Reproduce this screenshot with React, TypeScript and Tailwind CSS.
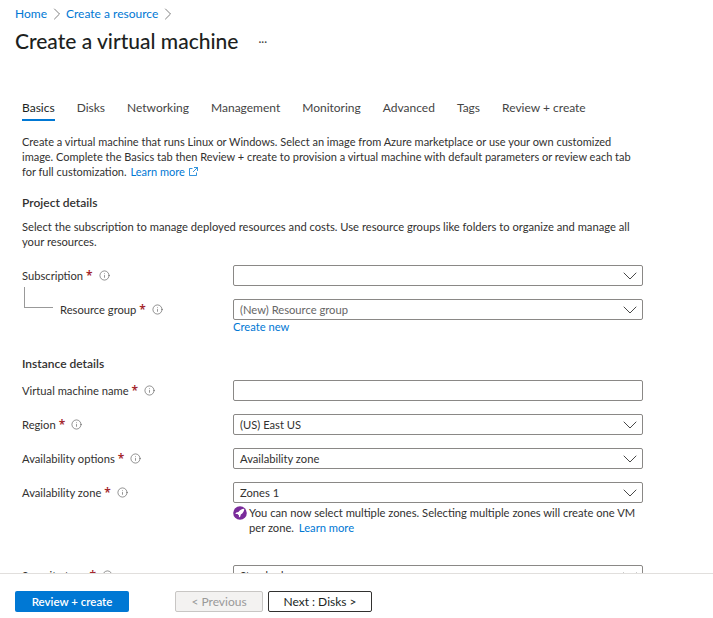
import { ChevronDown, ChevronRight, Info } from 'lucide-react'

const tabs = ['Basics', 'Disks', 'Networking', 'Management', 'Monitoring', 'Advanced', 'Tags', 'Review + create']

function Field({ label, value, dropdown = true, muted = false, indent = false }: { label: string; value?: string; dropdown?: boolean; muted?: boolean; indent?: boolean }) {
  return (
    <div className="flex h-[21px] items-center">
      <div className={`flex shrink-0 items-center ${indent ? 'w-[173px] pl-[38px]' : 'w-[211px]'} box-content`}>
        <span>{label}</span>
        <span className="ml-[3px] font-['Noto_Sans',sans-serif] text-[12px] font-semibold text-[#a4262c]">*</span>
        <Info size={11} strokeWidth={1.25} className="ml-[6px] text-[#444]" />
      </div>
      <div className={`flex h-[21px] w-[410px] items-center justify-between rounded-[2px] border border-[#8a8886] pl-[6px] ${muted ? 'text-[#666]' : ''}`}>
        <span>{value}</span>
        {dropdown && <ChevronDown size={24} strokeWidth={0.9} className="text-[#333]" />}
      </div>
    </div>
  )
}

function External() {
  return (
    <svg width="9" height="9" viewBox="0 0 9 9" fill="none" stroke="#0078d4" strokeWidth="0.8" className="ml-[4px] inline-block align-[0px]">
      <path d="M3.5 1.5H.5v7h7V5.5M5 .5h3.5V4M8.5.5 4 5" />
    </svg>
  )
}

export default function App() {
  return (
    <div className="flex h-[618px] w-[713px] flex-col overflow-hidden bg-white font-['Lato',sans-serif] text-[11.2px] leading-[15px] text-[#323130]">
      <main className="min-h-0 flex-1 overflow-hidden">
        <nav className="box-content flex h-[15px] items-center pl-[15px] pt-[6px] text-[12px] text-[#0078d4]">
          <span>Home</span>
          <ChevronRight size={20} strokeWidth={1} className="mr-[-2px] text-[#666]" />
          <span className="ml-[1px]">Create a resource</span>
          <ChevronRight size={20} strokeWidth={1} className="text-[#666]" />
        </nav>
        <div className="mt-[5px] flex items-center pl-[15px]">
          <h1 className="text-[21px] font-medium leading-[30px] text-[#201f1e]">Create a virtual machine</h1>
          <span className="ml-[20px] text-[11px] text-[#444]">···</span>
        </div>

        <div className="ml-[22px] mt-[44px] flex gap-[22px] text-[12px] text-[#444]">
          {tabs.map((t, i) => (
            <div key={t} className={`h-[21px] border-b-2 ${i === 0 ? 'border-[#0078d4] text-[#201f1e]' : 'border-transparent'}`}>{t}</div>
          ))}
        </div>

        <div className="px-[22px]">
          <p className="mt-[13px] w-[613px] text-[11px]">
            Create a virtual machine that runs Linux or Windows. Select an image from Azure marketplace or use your own customized image. Complete the Basics tab then Review + create to provision a virtual machine with default parameters or review each tab for full customization. <span className="ml-[1px] text-[#0078d4]">Learn more<External /></span>
          </p>
          <h2 className="mt-[16px] text-[12px] font-semibold">Project details</h2>
          <p className="mt-[9px] w-[610px]">Select the subscription to manage deployed resources and costs. Use resource groups like folders to organize and manage all your resources.</p>

          <div className="relative mt-[16px] flex flex-col gap-[13px]">
            <Field label="Subscription" />
            <Field label="Resource group" value="(New) Resource group" muted indent />
            <div className="absolute left-[2px] top-[22px] h-[21px] w-[29px] border-b border-l border-[#999]" />
          </div>
          <a className="ml-[211px] mt-[-1px] block text-[#0078d4]">Create new</a>

          <h2 className="mt-[22px] text-[12px] font-semibold">Instance details</h2>
          <div className="mt-[9px] flex flex-col gap-[13px]">
            <Field label="Virtual machine name" dropdown={false} />
            <Field label="Region" value="(US) East US" />
            <Field label="Availability options" value="Availability zone" />
            <Field label="Availability zone" value="Zones 1" />
          </div>
          <div className="ml-[211px] mt-[2px] flex w-[410px]">
            <svg width="14" height="14" viewBox="0 0 14 14" className="mr-[2px] mt-[1px] shrink-0">
              <circle cx="7" cy="7" r="6.8" fill="#7a2b9b" />
              <path d="M11.3 2.7c-2.7.1-4.5 1.2-5.9 3.4l-2.1.5-1 1.4 2.2-.1 1.5 1.5-.1 2.2 1.4-1 .5-2.1c2.2-1.4 3.4-3.2 3.5-5.8z" fill="#fff" />
            </svg>
            <p>You can now select multiple zones. Selecting multiple zones will create one VM per zone. <span className="ml-[2px] text-[#0078d4]">Learn more</span></p>
          </div>
          <div className="mt-[30px]">
            <Field label="Security type" value="Standard" />
          </div>
        </div>
      </main>
      <footer className="flex h-[45px] shrink-0 items-start border-t border-[#e1dfdd] pl-[15px] pt-[17px] text-[12px]">
        <button className="h-[21px] w-[114px] rounded-[2px] bg-[#0078d4] text-[11.5px] font-semibold text-white">Review + create</button>
        <button className="ml-[46px] h-[21px] w-[88px] rounded-[2px] border border-[#c8c6c4] bg-[#f3f2f1] text-[#999]">{'< Previous'}</button>
        <button className="ml-[5px] h-[21px] w-[104px] rounded-[2px] border border-[#323130] text-[#201f1e]">{'Next : Disks >'}</button>
      </footer>
    </div>
  )
}
